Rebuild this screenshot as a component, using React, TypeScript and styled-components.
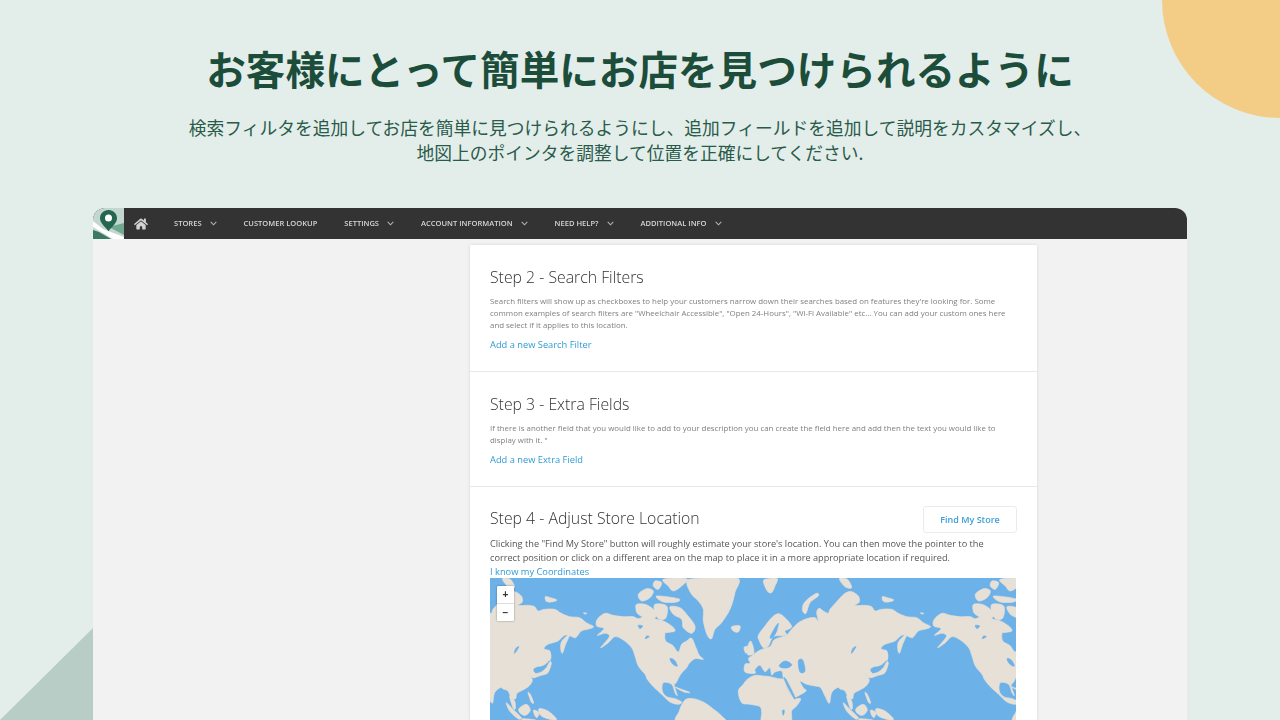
import React from "react";
import styled, { createGlobalStyle } from "styled-components";
import { FaHome } from "react-icons/fa";

const Global = createGlobalStyle`
  html, body { margin: 0; padding: 0; }
  body { background: #e3eeea; }
`;

const Page = styled.div`
  position: relative;
  width: 1280px;
  height: 720px;
  overflow: hidden;
  background: #e3eeea;
  display: flex;
  flex-direction: column;
  align-items: center;
`;

const Sun = styled.div`
  position: absolute;
  right: -118px;
  top: -118px;
  width: 236px;
  height: 236px;
  border-radius: 50%;
  background: #f3cd85;
`;

const Corner = styled.div`
  position: absolute;
  left: 0;
  bottom: 0;
  width: 93px;
  height: 92px;
  background: #b7cdc6;
  clip-path: polygon(0 100%, 100% 0, 100% 100%);
`;

const Title = styled.h1`
  margin: 39px 0 0;
  font: 700 39.6px/58px "Noto Sans CJK JP", sans-serif;
  color: #1c4d3b;
  white-space: nowrap;
`;

const Lead = styled.p`
  margin: 18px 0 0;
  font: 400 17.75px/25px "Noto Sans CJK JP", sans-serif;
  color: #2a5a4a;
  text-align: center;
  white-space: nowrap;
`;

const Frame = styled.div`
  margin-top: 43px;
  width: 1094px;
  flex: 1;
  min-height: 0;
  display: flex;
  flex-direction: column;
  background: #f2f2f2;
  border-radius: 12px 12px 0 0;
  overflow: hidden;
  filter: blur(0.3px);
`;

const Nav = styled.nav`
  flex: none;
  height: 31px;
  background: #333333;
  display: flex;
  align-items: center;
  color: #d6d6d6;
`;

const Logo = styled.svg`
  flex: none;
  width: 31px;
  height: 31px;
`;

const Home = styled(FaHome)`
  flex: none;
  width: 14px;
  height: 14px;
  margin: 0 26px 0 10px;
  color: #d2d2d2;
`;

const NavItem = styled.div`
  display: flex;
  align-items: center;
  gap: 8px;
  margin-right: 27px;
  font: 600 7.55px/31px "Open Sans", sans-serif;
  white-space: nowrap;
`;

const Chevron = styled.svg`
  width: 7px;
  height: 5px;
  fill: none;
  stroke: #b4b4b4;
  stroke-width: 1.1;
`;

const Body = styled.div`
  flex: 1;
  min-height: 0;
  padding: 6px 150px 0 377px;
`;

const Card = styled.div`
  width: 567px;
  background: #fff;
  box-shadow: 0 0 3px rgba(0, 0, 0, 0.12);
`;

const Section = styled.section<{ $h?: number; $top?: number }>`
  padding: ${(p) => p.$top ?? 22}px 20px 0;
  height: ${(p) => (p.$h ? `${p.$h}px` : "auto")};
  box-sizing: border-box;
  border-bottom: 1px solid #e8e8e8;
  &:last-child { border-bottom: 0; }
`;

const Head = styled.div`
  display: flex;
  justify-content: space-between;
  align-items: flex-start;
`;

const Heading = styled.h2`
  margin: 0;
  font: 300 15.8px/20px "Open Sans", sans-serif;
  color: #333;
`;

const StepFourHeading = styled(Heading)`
  margin-top: 2px;
`;

const Desc = styled.p`
  margin: 8px 0 0;
  font: 400 7.9px/12px "Open Sans", sans-serif;
  color: #808080;
`;

const Note = styled.p`
  margin: 4px 0 0;
  max-width: 505px;
  font: 400 9.2px/14px "Open Sans", sans-serif;
  color: #555;
`;

const LinkText = styled.a<{ $gap?: number }>`
  display: block;
  margin-top: ${(p) => p.$gap ?? 0}px;
  font: 400 9.3px/13px "Open Sans", sans-serif;
  color: #2f9bd6;
`;

const FindButton = styled.button`
  width: 94px;
  height: 27px;
  padding: 0;
  background: #fff;
  border: 1px solid #ebebeb;
  border-radius: 3px;
  font: 600 9px/25px "Open Sans", sans-serif;
  color: #3d9fd8;
`;

const MapBox = styled.div`
  position: relative;
  width: 526px;
  height: 142px;
  background: #6cb1e8;
  overflow: hidden;
`;

const MapArt = styled.svg`
  display: block;
  width: 526px;
  height: 142px;
`;

const Zoom = styled.div`
  position: absolute;
  left: 7px;
  top: 8px;
  width: 17px;
  display: flex;
  flex-direction: column;
  background: #fff;
  box-shadow: 0 0 2px rgba(0, 0, 0, 0.45);
  border-radius: 1px;
`;

const ZoomKey = styled.div`
  height: 17px;
  font: 700 10px/17px "Liberation Sans", sans-serif;
  color: #333;
  text-align: center;
  & + & { border-top: 1px solid #ddd; }
`;

const LAND = "#e7e0d7";
const SEA = "#6cb1e8";

const oldWorld = [
  "15,292 -15,288 -15,265 0,262 -5,248 5,240 25,225 45,217 62,210 72,192 95,183 110,178 125,160 145,140 170,128 195,125 205,135 200,110 207,97 220,105 235,112 240,100 262,75 285,52 305,47 325,60 328,78 315,88 345,88 365,92 375,105 395,100 425,100 445,112 470,122 500,125 520,140 542,152 525,160 505,165 488,185 472,180 455,178 435,195 405,205 393,218 410,225 412,245 400,262 385,270 372,272 360,282 372,300 358,305 345,290 358,312 348,330 330,342 312,352 308,368 295,365 285,345 272,340 262,335 245,350 238,382 225,360 212,335 195,330 170,325 150,315 160,335 168,345 140,362 125,365 110,325 100,305 95,285 75,288 65,297 60,275 45,287 30,268 15,280",
  "25,178 45,150 65,125 85,113 105,125 125,152 105,165 110,178 75,180 65,188 55,210 40,215 28,195",
  "-35,345 -20,325 -8,310 15,298 40,300 60,302 85,308 102,312 115,345 130,368 152,368 140,390 125,405 118,440 40,440 35,410 30,392 0,385 -25,380",
  "40,15 55,8 82,8 75,30 65,50 52,45",
  "200,52 205,60 180,80 168,112 158,105 160,85 175,68",
  "268,8 292,10 305,35 285,32",
  "397,62 412,65 432,72 415,78 400,76",
  "512,110 522,112 515,114",
  "470,175 458,205 448,232 443,215 447,195",
  "408,222 414,240 410,255 405,240",
  "415,262 405,290 385,298 368,303 365,295 385,288 400,275 410,258",
  "345,350 352,355 362,380 355,378",
  "280,380 298,398 325,425 315,428 290,405",
  "290,360 300,395 307,398 305,375",
  "318,398 340,385 352,402 338,418 322,412",
  "362,402 378,410 372,425 365,418",
  "378,398 405,405 430,428 420,432 385,420",
  "330,428 368,432 332,434",
  "-10,222 2,195 12,230 -5,237",
  "-18,215 -8,212 -12,232",
];

const oldWorldSea = [
  "88,268 105,255 125,265 115,275 95,275",
  "145,255 158,252 165,285 150,288",
  "60,185 72,160 85,142 80,165 70,182",
  "308,218 318,212 305,232",
  "97,405 103,403 100,418",
  "104,312 108,310 134,362 130,364",
];

const newWorld = [
  "322,130 345,112 370,118 400,122 430,122 445,128 470,120 500,130 520,135 545,150 555,165 530,170 525,172 527,195 548,208 565,228 575,205 590,195 605,187 618,215 628,238 640,250 615,248 598,262 590,275 572,295 560,318 553,328 562,358 555,350 545,325 520,320 517,345 530,362 555,368 575,378 565,385 540,378 515,355 490,332 472,310 465,295 445,270 435,240 425,215 400,192 375,182 355,200 332,215 358,182 345,172 322,178 342,158 320,150",
  "440,85 465,85 490,100 500,120 478,130 445,115 438,100",
  "445,55 470,38 490,45 480,65 455,75",
  "520,10 590,8 575,30 550,45 535,30",
  "500,60 565,68 560,78 520,78",
  "540,92 570,95 590,115 615,150 605,172 580,155 575,130 550,115",
  "495,85 530,90 528,125 508,130 495,110",
  "495,15 515,20 505,40 490,30",
  "590,20 610,8 740,5 735,50 720,100 695,140 675,160 665,188 652,178 640,135 640,100 625,75 605,55",
  "725,152 750,150 745,168 730,165",
  "565,440 568,405 585,372 610,368 640,378 665,395 695,420 700,440",
  "555,333 575,340 600,350 580,347",
];

const newWorldSea = [
  "540,248 553,252 562,270 548,264",
  "445,148 458,150 450,158",
  "470,180 478,182 466,188",
];

// Closed Catmull-Rom curve through the traced coastline points.
const smooth = (points: string) => {
  const pts = points.split(" ").map((p) => p.split(",").map(Number));
  const n = pts.length;
  let d = `M${pts[0][0]} ${pts[0][1]}`;
  for (let i = 0; i < n; i++) {
    const [p0, p1, p2, p3] = [pts[(i - 1 + n) % n], pts[i], pts[(i + 1) % n], pts[(i + 2) % n]];
    const c1x = p1[0] + (p2[0] - p0[0]) / 6;
    const c1y = p1[1] + (p2[1] - p0[1]) / 6;
    const c2x = p2[0] - (p3[0] - p1[0]) / 6;
    const c2y = p2[1] - (p3[1] - p1[1]) / 6;
    d += `C${c1x.toFixed(1)} ${c1y.toFixed(1)} ${c2x.toFixed(1)} ${c2y.toFixed(1)} ${p2[0]} ${p2[1]}`;
  }
  return d + "Z";
};

const Coast = ({ land, sea }: { land: string[]; sea: string[] }) => (
  <>
    {land.map((p) => <path key={p} d={smooth(p)} fill={LAND} stroke={LAND} strokeWidth={2} strokeLinejoin="round" />)}
    {sea.map((p) => <path key={p} d={smooth(p)} fill={SEA} stroke={SEA} strokeWidth={2} strokeLinejoin="round" />)}
  </>
);

const items: { label: string; caret: boolean }[] = [
  { label: "STORES", caret: true },
  { label: "CUSTOMER LOOKUP", caret: false },
  { label: "SETTINGS", caret: true },
  { label: "ACCOUNT INFORMATION", caret: true },
  { label: "NEED HELP?", caret: true },
  { label: "ADDITIONAL INFO", caret: true },
];

export default function App() {
  return (
    <Page>
      <Global />
      <Sun />
      <Corner />
      <Title>お客様にとって簡単にお店を見つけられるように</Title>
      <Lead>
        検索フィルタを追加してお店を簡単に見つけられるようにし、追加フィールドを追加して説明をカスタマイズし、
        <br />
        地図上のポインタを調整して位置を正確にしてください.
      </Lead>
      <Frame>
        <Nav>
          <Logo viewBox="0 0 31 31">
            <rect width="31" height="31" fill="#c3d6cf" />
            <polygon points="0,13 10,21 31,29 31,31 20,31 8,24 0,19" fill="#fff" />
            <polygon points="0,22 6,24 18,31 0,31" fill="#3b7a62" />
            <polygon points="16,19 31,15 31,27" fill="#6fa98f" />
            <path d="M15.5 2c-5 0-8.5 3.8-8.5 8.3 0 5 5.2 8.5 8.5 13 3.3-4.5 8.5-8 8.5-13 0-4.5-3.5-8.3-8.5-8.3z" fill="#256650" />
            <circle cx="15.5" cy="10" r="3.5" fill="#fff" />
          </Logo>
          <Home />
          {items.map((it) => (
            <NavItem key={it.label}>
              {it.label}
              {it.caret && (
                <Chevron viewBox="0 0 7 5">
                  <path d="M0.7 0.8 3.5 3.8 6.3 0.8" />
                </Chevron>
              )}
            </NavItem>
          ))}
        </Nav>
        <Body>
          <Card>
            <Section $h={127}>
              <Heading>Step 2 - Search Filters</Heading>
              <Desc>
                Search filters will show up as checkboxes to help your customers narrow down their searches based on features they're looking for. Some common examples of search filters are "Wheelchair Accessible", "Open 24-Hours", "Wi-Fi Available" etc... You can add your custom ones here and select if it applies to this location.
              </Desc>
              <LinkText $gap={7}>Add a new Search Filter</LinkText>
            </Section>
            <Section $h={115}>
              <Heading>Step 3 - Extra Fields</Heading>
              <Desc>
                If there is another field that you would like to add to your description you can create the field here and add then the text you would like to display with it. "
              </Desc>
              <LinkText $gap={7}>Add a new Extra Field</LinkText>
            </Section>
            <Section $top={19}>
              <Head>
                <StepFourHeading>Step 4 - Adjust Store Location</StepFourHeading>
                <FindButton>Find My Store</FindButton>
              </Head>
              <Note>
                Clicking the "Find My Store" button will roughly estimate your store's location. You can then move the pointer to the correct position or click on a different area on the map to place it in a more appropriate location if required.
              </Note>
              <LinkText>I know my Coordinates</LinkText>
              <MapBox>
                <MapArt viewBox="490 578 526 142">
                  <defs>
                    <g id="old-world"><Coast land={oldWorld} sea={oldWorldSea} /></g>
                    <g id="new-world"><Coast land={newWorld} sea={newWorldSea} /></g>
                  </defs>
                  <use href="#old-world" transform="translate(750 576) scale(0.3333)" />
                  <use href="#old-world" transform="translate(413 576) scale(0.3333)" />
                  <use href="#new-world" transform="translate(490 576) scale(0.3333)" />
                  <use href="#new-world" transform="translate(827 576) scale(0.3333)" />
                </MapArt>
                <Zoom>
                  <ZoomKey>+</ZoomKey>
                  <ZoomKey>−</ZoomKey>
                </Zoom>
              </MapBox>
            </Section>
          </Card>
        </Body>
      </Frame>
    </Page>
  );
}
